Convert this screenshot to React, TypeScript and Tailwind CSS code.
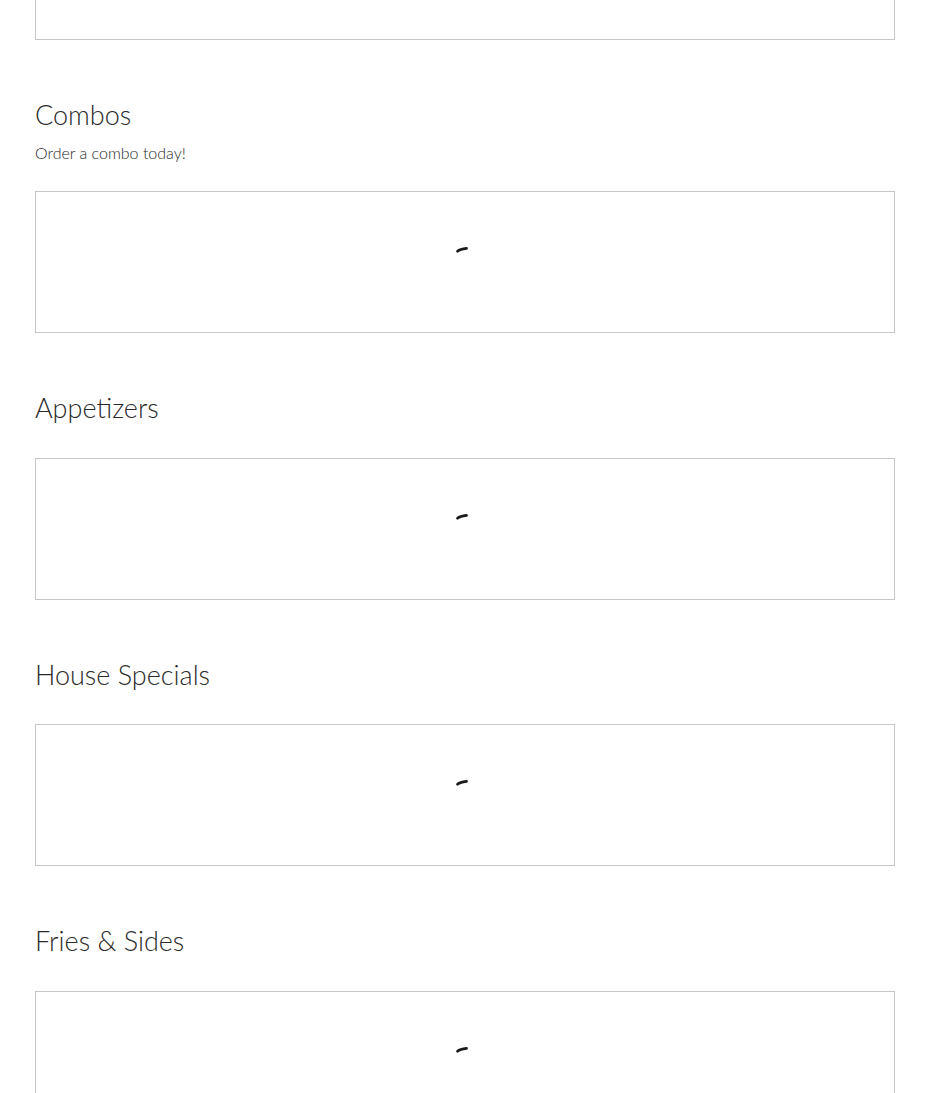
import React from "react";

const font = { fontFamily: "Lato, 'Open Sans', sans-serif" };

function Spinner() {
  return (
    <svg width="16" height="10" viewBox="0 0 16 10" className="block">
      <path d="M3.5 7.2 Q6 5 12.5 4.3" stroke="#1a1a1a" strokeWidth="2.8" fill="none" strokeLinecap="round" />
    </svg>
  );
}

function LoadingBox() {
  return (
    <div className="h-[142px] border border-[#c6c6c6] flex justify-center pt-[52px]">
      <div className="ml-[-6px]">
        <Spinner />
      </div>
    </div>
  );
}

function Section({ title, subtitle }: { title: string; subtitle?: string }) {
  return (
    <section className="mt-[56px]">
      <h2 className="text-[27px] leading-[37px] font-light text-[#2a2a2a]">{title}</h2>
      {subtitle ? (
        <>
          <p className="mt-[8px] text-[16px] leading-[24px] font-light text-[#2a2a2a]">{subtitle}</p>
          <div className="mt-[26px]">
            <LoadingBox />
          </div>
        </>
      ) : (
        <div className="mt-[31.67px]">
          <LoadingBox />
        </div>
      )}
    </section>
  );
}

export default function App() {
  return (
    <div className="w-[930px] h-[1093px] overflow-hidden bg-white" style={font}>
      <div className="mx-[35px]">
        <div className="h-[40px] border-x border-b border-[#c6c6c6]" />
        <Section title="Combos" subtitle="Order a combo today!" />
        <Section title="Appetizers" />
        <Section title="House Specials" />
        <Section title="Fries & Sides" />
      </div>
    </div>
  );
}
